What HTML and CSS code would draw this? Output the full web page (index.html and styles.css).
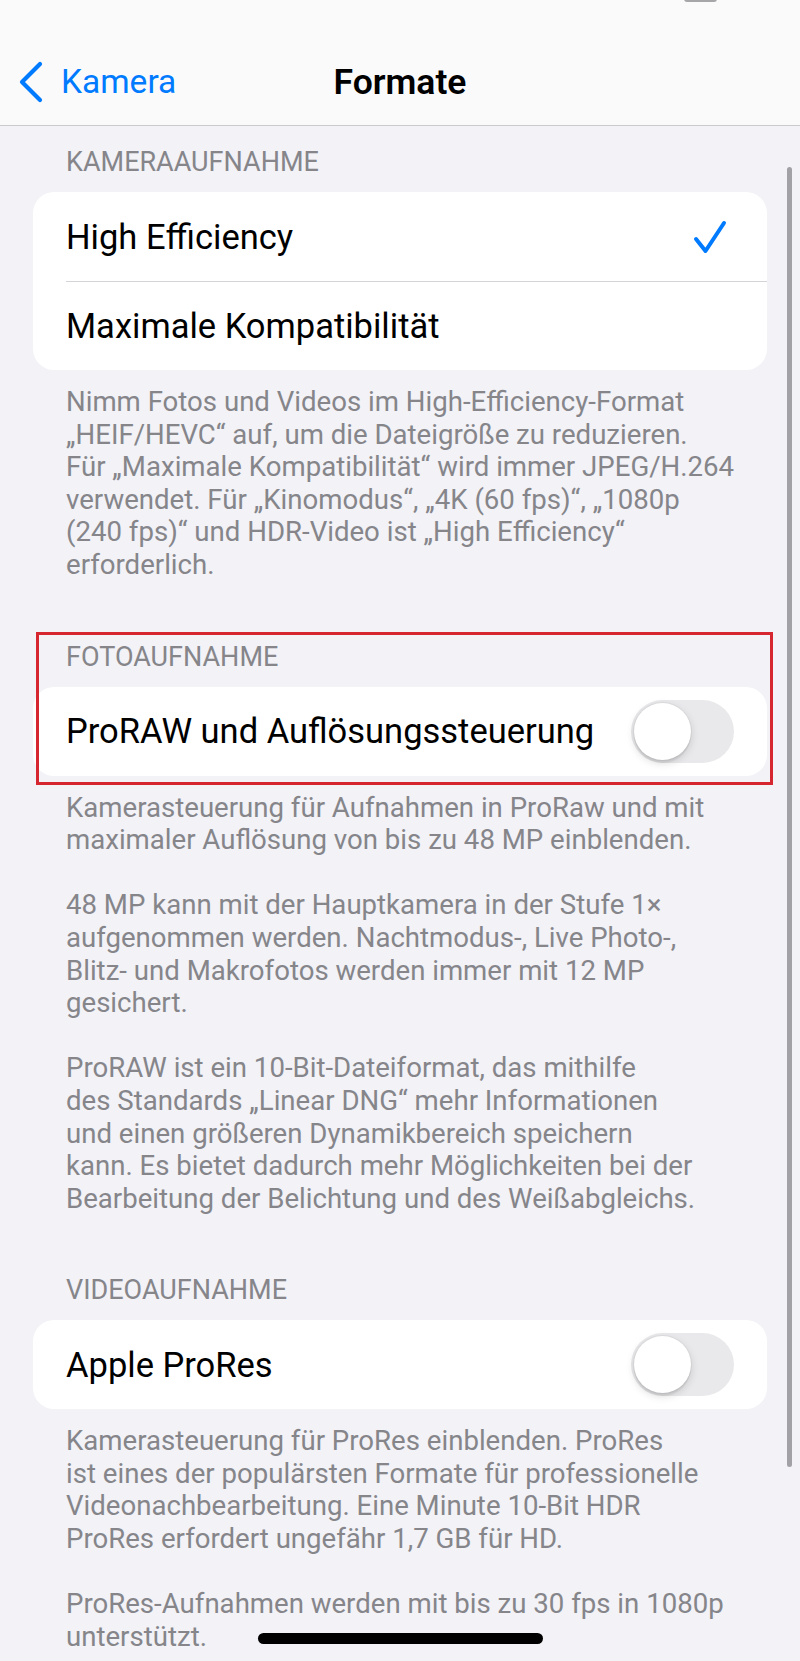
FILE: index.html
```html
<!DOCTYPE html>
<html lang="de">
<head>
<meta charset="utf-8">
<title>Formate</title>
<link rel="stylesheet" href="styles.css">
</head>
<body>
<div class="screen">
  <header class="topbar">
    <div class="status"><span class="battery-edge"></span></div>
    <nav class="navbar">
      <a class="back">
        <svg class="chevron" width="26" height="42" viewBox="0 0 26 42"><polyline points="23,3 5,21 23,39"/></svg>
        <span>Kamera</span>
      </a>
      <h1 class="title">Formate</h1>
      <span></span>
    </nav>
  </header>

  <main class="content">
    <section class="group">
      <h2 class="group-header">KAMERAAUFNAHME</h2>
      <div class="card">
        <div class="row">
          <div class="row-content">
            <span class="label">High Efficiency</span>
            <svg class="check" width="34" height="34" viewBox="0 0 34 34"><polyline points="3,19 12.5,31 31,3"/></svg>
          </div>
        </div>
        <div class="row">
          <div class="row-content">
            <span class="label">Maximale Kompatibilität</span>
          </div>
        </div>
      </div>
      <div class="group-footer">
        <p>Nimm Fotos und Videos im High-Efficiency-Format<br>„HEIF/HEVC“ auf, um die Dateigröße zu reduzieren.<br>Für „Maximale Kompatibilität“ wird immer JPEG/H.264<br>verwendet. Für „Kinomodus“, „4K (60 fps)“, „1080p<br>(240 fps)“ und HDR-Video ist „High Efficiency“<br>erforderlich.</p>
      </div>
    </section>

    <section class="group">
      <div class="highlight-area">
        <h2 class="group-header">FOTOAUFNAHME</h2>
        <div class="card">
          <div class="row">
            <div class="row-content">
              <span class="label">ProRAW und Auflösungssteuerung</span>
              <span class="switch"><span class="knob"></span></span>
            </div>
          </div>
        </div>
      </div>
      <div class="group-footer">
        <p>Kamerasteuerung für Aufnahmen in ProRaw und mit<br>maximaler Auflösung von bis zu 48 MP einblenden.</p>
        <p>48 MP kann mit der Hauptkamera in der Stufe 1×<br>aufgenommen werden. Nachtmodus-, Live Photo-,<br>Blitz- und Makrofotos werden immer mit 12 MP<br>gesichert.</p>
        <p>ProRAW ist ein 10-Bit-Dateiformat, das mithilfe<br>des Standards „Linear DNG“ mehr Informationen<br>und einen größeren Dynamikbereich speichern<br>kann. Es bietet dadurch mehr Möglichkeiten bei der<br>Bearbeitung der Belichtung und des Weißabgleichs.</p>
      </div>
    </section>

    <section class="group">
      <h2 class="group-header">VIDEOAUFNAHME</h2>
      <div class="card">
        <div class="row">
          <div class="row-content">
            <span class="label">Apple ProRes</span>
            <span class="switch"><span class="knob"></span></span>
          </div>
        </div>
      </div>
      <div class="group-footer">
        <p>Kamerasteuerung für ProRes einblenden. ProRes<br>ist eines der populärsten Formate für professionelle<br>Videonachbearbeitung. Eine Minute 10-Bit HDR<br>ProRes erfordert ungefähr 1,7 GB für HD.</p>
        <p>ProRes-Aufnahmen werden mit bis zu 30 fps in 1080p<br>unterstützt.</p>
      </div>
    </section>
  </main>

  <div class="scroll-indicator"></div>
  <div class="home-indicator"></div>
</div>
</body>
</html>
```

FILE: styles.css
```css
* {
  box-sizing: border-box;
}

body {
  margin: 0;
  background: #f2f2f7;
  font-family: Roboto, "Liberation Sans", sans-serif;
  color: #000;
}

.screen {
  position: relative;
  width: 800px;
  height: 1661px;
  overflow: hidden;
}

/* Top navigation bar */
.topbar {
  height: 126px;
  background: #fafafb;
  border-bottom: 1px solid #cacacd;
}

.status {
  position: relative;
  height: 38px;
}

.battery-edge {
  position: absolute;
  left: 684px;
  top: -8px;
  width: 33px;
  height: 10px;
  border-radius: 3px;
  background: #a6a6a8;
}

.navbar {
  height: 87px;
  display: grid;
  grid-template-columns: 1fr auto 1fr;
  align-items: center;
}

.back {
  display: flex;
  align-items: center;
  gap: 18px;
  padding-left: 17px;
  color: #007aff;
  font-size: 33.5px;
  line-height: 40px;
}

.chevron polyline {
  fill: none;
  stroke: #007aff;
  stroke-width: 4.2;
  stroke-linecap: round;
  stroke-linejoin: round;
}

.title {
  margin: 0;
  font-size: 35.5px;
  font-weight: 600;
  line-height: 40px;
}

/* Grouped list */
.content {
  padding: 20px 33px 0;
}

.group + .group {
  margin-top: 59px;
}

.group-header {
  margin: 0 0 14px;
  padding-left: 33px;
  font-size: 27px;
  font-weight: 400;
  line-height: 32px;
  color: #85858a;
}

.card {
  background: #fff;
  border-radius: 21px;
  overflow: hidden;
}

.row {
  padding-left: 33px;
}

.row-content {
  height: 89px;
  display: flex;
  align-items: center;
  justify-content: space-between;
  padding-right: 33px;
  font-size: 34.5px;
  line-height: 40px;
}

.row + .row .row-content {
  border-top: 1px solid #d4d4d8;
}

.check {
  margin-right: 7px;
}

.check polyline {
  fill: none;
  stroke: #007aff;
  stroke-width: 4;
  stroke-linecap: round;
  stroke-linejoin: round;
}

/* Toggle switch, off state */
.switch {
  display: flex;
  align-items: center;
  width: 103px;
  height: 63px;
  padding: 3px;
  border-radius: 32px;
  background: #e9e9eb;
}

.knob {
  width: 57px;
  height: 57px;
  border-radius: 50%;
  background: #fff;
  box-shadow: 0 0 0 1px rgba(0, 0, 0, 0.04), 0 3px 8px rgba(0, 0, 0, 0.15), 0 3px 1px rgba(0, 0, 0, 0.06);
}

.group-footer {
  margin-top: 16px;
  padding-left: 33px;
  font-size: 27.6px;
  line-height: 32.6px;
  color: #85858a;
  white-space: nowrap;
}

.group-footer p {
  margin: 0;
}

.group-footer p + p {
  margin-top: 32.6px;
}

/* Red frame marking the photo section */
.highlight-area {
  position: relative;
}

.highlight-area::after {
  content: "";
  position: absolute;
  left: 3px;
  right: -6px;
  top: -9px;
  bottom: -9px;
  border: 3px solid #d6262f;
  pointer-events: none;
}

/* Overlays */
.scroll-indicator {
  position: absolute;
  left: 787px;
  top: 167px;
  width: 5px;
  height: 1300px;
  border-radius: 3px;
  background: #a1a1a6;
}

.home-indicator {
  position: absolute;
  left: 258px;
  bottom: 17px;
  width: 285px;
  height: 11px;
  border-radius: 6px;
  background: #000;
}
```
